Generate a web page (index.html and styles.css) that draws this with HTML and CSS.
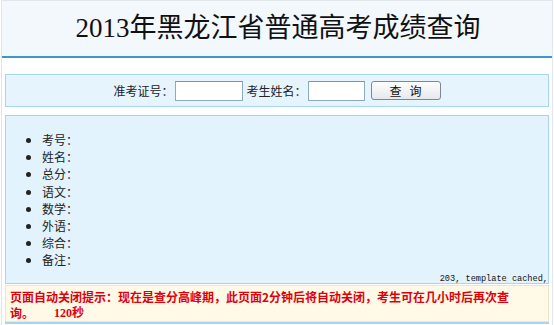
FILE: index.html
```html
<!DOCTYPE html>
<html lang="zh-CN">
<head>
  <meta charset="UTF-8" />
  <title>2013年黑龙江省普通高考成绩查询</title>
  <link rel="stylesheet" href="styles.css">
</head>
<body>
  <div class="page">
    <div class="header">
      <h1>2013年黑龙江省普通高考成绩查询</h1>
    </div>

    <!-- 查询表单 -->
    <form class="search-box" onsubmit="return false;">
      <label>准考证号：</label>
      <input type="text" class="field" name="ksh">
      <label>考生姓名：</label>
      <input type="text" class="field small" name="xm">
      <button type="submit" class="btn">查&nbsp;&nbsp;&nbsp;询</button>
    </form>

    <!-- 查询结果 -->
    <div class="result-box">
      <ul class="result-list">
        <li>考号：</li>
        <li>姓名：</li>
        <li>总分：</li>
        <li>语文：</li>
        <li>数学：</li>
        <li>外语：</li>
        <li>综合：</li>
        <li>备注：</li>
      </ul>
      <div class="debug">203, template cached,</div>
    </div>

    <div class="notice">
      <div class="notice-line">页面自动关闭提示：现在是查分高峰期，此页面2分钟后将自动关闭，考生可在几小时后再次查</div>
      <div class="notice-line">
        <span>询。</span>
        <span class="count">120秒</span>
      </div>
    </div>
    <div class="footer"></div>
  </div>
</body>
</html>
```

FILE: styles.css
```css
/* ===== Base ===== */
* {
  margin: 0;
  padding: 0;
  box-sizing: border-box;
}
html, body {
  background: #fff;
  font-family: "Noto Sans CJK SC", "Liberation Sans", sans-serif;
  font-size: 12px;
  color: #222;
}
.page {
  margin: 0 1px;
  border-left: 1px solid #e2e6ea;
  border-right: 1px solid #e2e6ea;
  border-top: 1px solid #e2e6ea;
  height: 325px;
  overflow: hidden;
}

/* ===== Header ===== */
.header {
  height: 57px;
  background: #f3f8fc;
  border-bottom: 2px solid #3a98cf;
  text-align: center;
}
.header h1 {
  font-family: "Liberation Serif", "Noto Sans CJK SC", serif;
  font-weight: normal;
  font-size: 27px;
  line-height: 54px;
  color: #111;
  padding-left: 2px;
}

/* ===== Search form ===== */
.search-box {
  margin: 16px 3px 0 3px;
  height: 33px;
  background: #e5f4fd;
  border: 1px solid #a7d7f0;
  display: flex;
  justify-content: center;
  align-items: center;
}
.search-box label {
  color: #222;
  margin-right: 1px;
}
.field {
  width: 68px;
  height: 20px;
  border: 1px solid #8fa9bf;
  border-top-color: #7d93a6;
  background: #fff;
  margin-right: 4px;
}
.field.small {
  width: 57px;
  margin-right: 6px;
}
.btn {
  width: 70px;
  height: 19px;
  border: 1px solid #7b8896;
  border-radius: 3px;
  background: linear-gradient(#fdfdfd, #e6e9ec);
  font-family: "Noto Sans CJK SC", sans-serif;
  font-size: 12px;
  color: #111;
  line-height: 16px;
}

/* ===== Result ===== */
.result-box {
  margin: 8px 3px 0 3px;
  height: 169px;
  background: #e3f3fd;
  border: 1px solid #a7d7f0;
  padding-top: 15px;
}
.result-list {
  padding-left: 36px;
  line-height: 17.2px;
}
.result-list li {
  list-style: disc;
}
.debug {
  text-align: right;
  font-family: "Liberation Mono", monospace;
  font-size: 8.6px;
  line-height: 12px;
  margin-top: 4px;
  color: #111;
}

/* ===== Notice ===== */
.notice {
  margin: 1px 3px 0 3px;
  height: 37px;
  background: #fffae8;
  border: 1px solid #efe6c4;
  padding: 3px 0 0 4px;
}
.notice-line {
  display: flex;
  gap: 20px;
  color: #e0000c;
  font-weight: bold;
  font-size: 12px;
  line-height: 16px;
  white-space: nowrap;
}
.count {
  font-family: "Liberation Serif", "Noto Sans CJK SC", serif;
}
.footer {
  margin: 0 3px;
  border-top: 2px solid #a7d7f0;
}
```
